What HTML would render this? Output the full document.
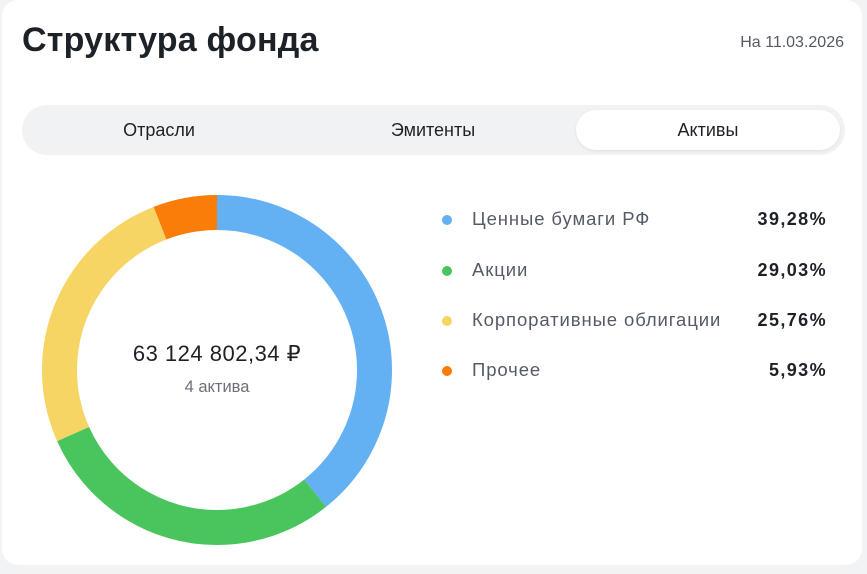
<!DOCTYPE html>
<html><head><meta charset="utf-8"><style>
body{margin:0;width:867px;height:574px;background:#f2f3f5;font-family:"Liberation Sans",sans-serif;position:relative;overflow:hidden}
.card{position:absolute;left:2px;top:0;width:860px;height:565px;background:#fff;border-radius:16px}
h1{position:absolute;left:20px;top:21px;margin:0;font-size:34px;font-weight:bold;color:#1d2128;letter-spacing:0.2px}
.date{position:absolute;right:18px;top:34px;font-size:16px;color:#555b66}
.tabs{position:absolute;left:20px;top:105px;width:823px;height:50px;background:#f1f2f4;border-radius:25px}
.tab{position:absolute;top:0;height:50px;line-height:50px;font-size:18px;color:#1d2128;text-align:center}
.act{position:absolute;left:554px;top:5px;width:264px;height:40px;background:#fff;border-radius:20px;box-shadow:0 1px 3px rgba(0,0,0,.08)}
.lg{position:absolute;left:442px;font-size:18.5px;color:#555b66;letter-spacing:0.9px}
.lg i{position:absolute;left:0;top:7px;width:10px;height:10px;border-radius:50%}
.lg span{position:absolute;left:30px;white-space:nowrap}
.pc{position:absolute;right:40px;font-size:18px;font-weight:bold;color:#1d2128;letter-spacing:1.4px}
</style></head><body>
<div class="card">
<h1>Структура фонда</h1>
<div class="date">На 11.03.2026</div>
<div class="tabs">
<div class="act"></div>
<div class="tab" style="left:0;width:274px">Отрасли</div>
<div class="tab" style="left:274px;width:274px">Эмитенты</div>
<div class="tab" style="left:554px;width:264px">Активы</div>
</div>
</div>
<svg style="position:absolute;left:0;top:0" width="867" height="574">
<g transform="rotate(-90 217 370)" fill="none" stroke-width="35">
<circle cx="217" cy="370" r="157.5" stroke="#63b0f3" stroke-dasharray="388.7 1000" stroke-dashoffset="0"/>
<circle cx="217" cy="370" r="157.5" stroke="#4ac55e" stroke-dasharray="287.3 1000" stroke-dashoffset="-388.7"/>
<circle cx="217" cy="370" r="157.5" stroke="#f6d565" stroke-dasharray="254.9 1000" stroke-dashoffset="-676"/>
<circle cx="217" cy="370" r="157.5" stroke="#f97d08" stroke-dasharray="58.7 1000" stroke-dashoffset="-930.9"/>
</g>
<text x="217" y="361" text-anchor="middle" font-family="Liberation Sans" font-size="22" fill="#1d2128" letter-spacing="0.5">63 124 802,34 ₽</text>
<text x="217" y="392" text-anchor="middle" font-family="Liberation Sans" font-size="16.5" fill="#6b707a">4 актива</text>
</svg>
<div class="lg" style="top:208px"><i style="background:#63b0f3"></i><span>Ценные бумаги РФ</span></div>
<div class="pc" style="top:209px">39,28%</div>
<div class="lg" style="top:259px"><i style="background:#4ac55e"></i><span>Акции</span></div>
<div class="pc" style="top:260px">29,03%</div>
<div class="lg" style="top:309px"><i style="background:#f6d565"></i><span>Корпоративные облигации</span></div>
<div class="pc" style="top:310px">25,76%</div>
<div class="lg" style="top:359px"><i style="background:#f97d08"></i><span>Прочее</span></div>
<div class="pc" style="top:360px">5,93%</div>
</body></html>
